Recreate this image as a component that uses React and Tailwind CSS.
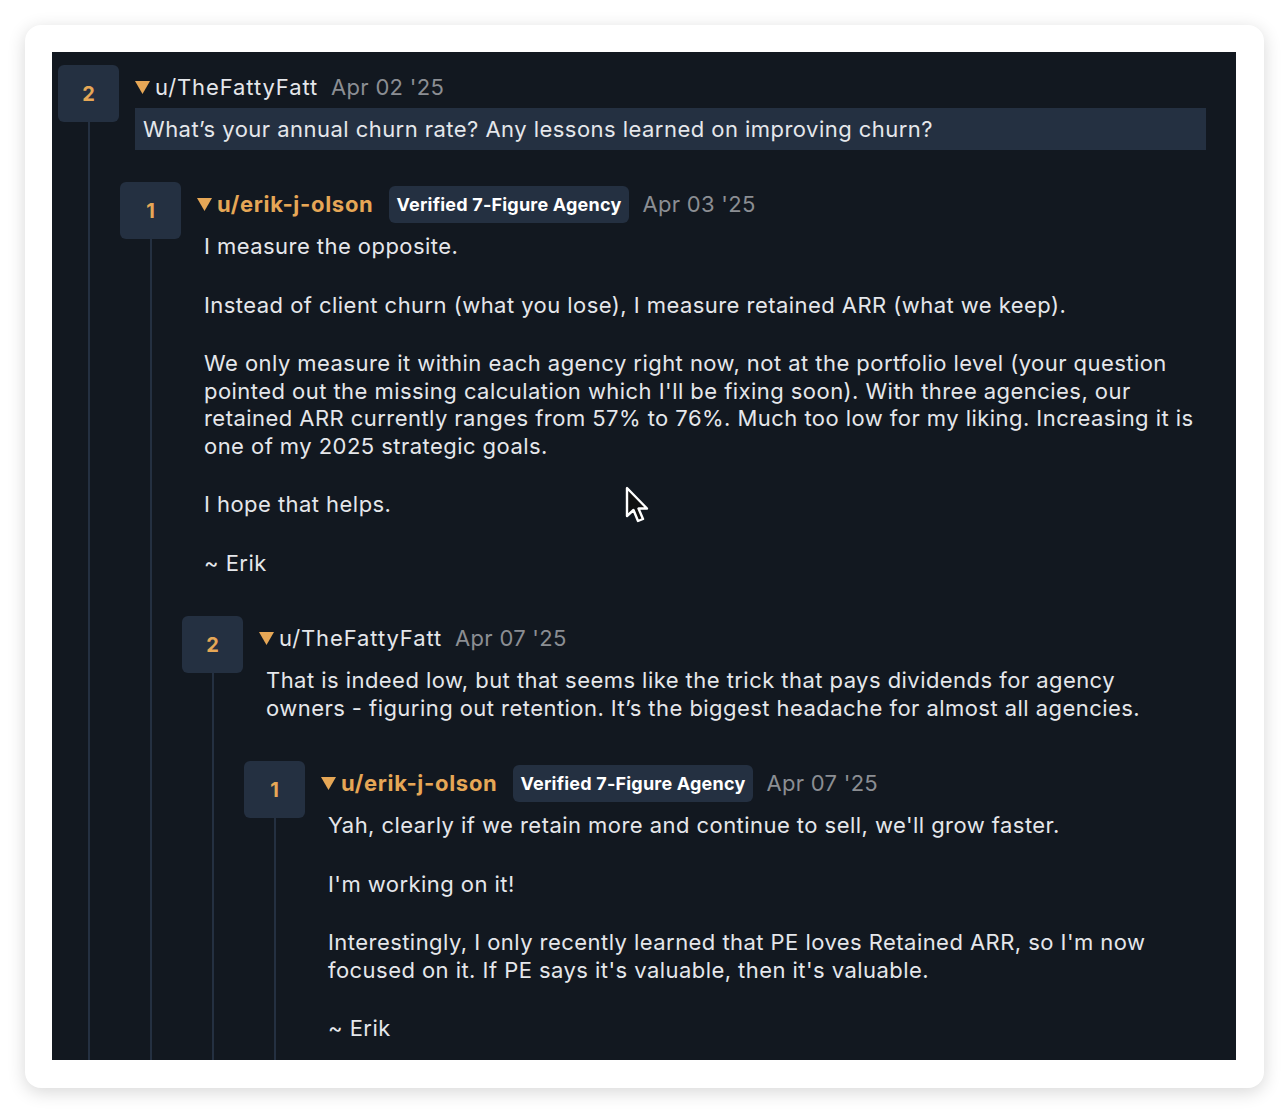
import React from 'react'

const ORANGE = 'text-[#e6a756]'

function Caret() {
  return (
    <svg width="15" height="13" viewBox="0 0 15 13" className="shrink-0">
      <polygon points="0,0 15,0 7.5,13" fill="#e6a756" />
    </svg>
  )
}

function Cursor() {
  return (
    <svg width="28" height="40" viewBox="0 0 28 40" className="absolute left-[572px] top-[434px] pointer-events-none">
      <path
        d="M3 2 L3 30 L9.5 24 L14 35 L19 33 L14.5 22.5 L23 22.5 Z"
        fill="#111"
        stroke="#fff"
        strokeWidth="2.4"
        strokeLinejoin="round"
      />
    </svg>
  )
}

function Comment({ score, user, op, verified, date, title, paras = [], tail, children }) {
  return (
    <div className="flex">
      <div className="w-[62px] shrink-0 flex flex-col">
        <div className={`w-[61px] h-[57px] rounded-md bg-[#243041] flex items-center justify-center font-bold text-[20px] ${ORANGE}`}>
          {score}
        </div>
        <div className="w-[2px] flex-1 bg-[#243041] ml-[30px]" />
      </div>
      <div className="flex-1 min-w-0">
        <div className="pl-[15px]">
          <div className="h-[44px] flex items-center">
            <div className="flex items-center gap-[5px]">
              <Caret />
              <span
                className={
                  op
                    ? 'text-[22px] tracking-[0.9px] text-[#e5e7eb]'
                    : `text-[22px] tracking-[0.7px] font-bold ${ORANGE}`
                }
              >
                {user}
              </span>
            </div>
            {verified && (
              <span className="ml-[15px] h-[37px] px-[8px] flex items-center rounded-md bg-[#243041] text-white font-bold text-[18px] tracking-[0.2px]">
                Verified 7-Figure Agency
              </span>
            )}
            <span className="ml-[13px] text-[22px] tracking-[0.3px] text-[#8b8e93]">{date}</span>
          </div>
          {title ? (
            <div className="-mt-px bg-[#243041] px-[8px] py-[7px] text-[22px] tracking-[0.46px] leading-[28px] text-[#e5e7eb]">
              {title}
            </div>
          ) : (
            <div className="pl-[7px] pr-[8px] pt-[7px] pb-[7px] text-[22px] tracking-[0.45px] leading-[27.5px] text-[#e5e7eb] flex flex-col gap-[31px]">
              {paras.map((p, i) => (
                <p key={i}>{p}</p>
              ))}
            </div>
          )}
          {tail && <div className="h-[60px]" />}
        </div>
        {children && <div className="mt-[32px]">{children}</div>}
      </div>
    </div>
  )
}

export default function App() {
  return (
    <div className="min-h-screen bg-white p-[25px]" style={{ fontFamily: 'Inter, "Noto Sans", sans-serif' }}>
      <div className="w-[1239px] h-[1063px] rounded-2xl bg-white shadow-[0_4px_18px_rgba(0,0,0,0.16)] p-[27px]">
        <div className="relative w-[1184px] h-[1008px] bg-[#121820] overflow-hidden pl-[6px] pt-[13px] pr-[30px]">
          <Comment
            score="2"
            user="u/TheFattyFatt"
            op
            date="Apr 02 '25"
            title="What’s your annual churn rate? Any lessons learned on improving churn?"
          >
            <Comment
              score="1"
              user="u/erik-j-olson"
              verified
              date="Apr 03 '25"
              paras={[
                'I measure the opposite.',
                'Instead of client churn (what you lose), I measure retained ARR (what we keep).',
                "We only measure it within each agency right now, not at the portfolio level (your question pointed out the missing calculation which I'll be fixing soon). With three agencies, our retained ARR currently ranges from 57% to 76%. Much too low for my liking. Increasing it is one of my 2025 strategic goals.",
                'I hope that helps.',
                '~ Erik',
              ]}
            >
              <Comment
                score="2"
                user="u/TheFattyFatt"
                op
                date="Apr 07 '25"
                paras={[
                  'That is indeed low, but that seems like the trick that pays dividends for agency owners - figuring out retention. It’s the biggest headache for almost all agencies.',
                ]}
              >
                <Comment
                  score="1"
                  user="u/erik-j-olson"
                  verified
                  date="Apr 07 '25"
                  tail
                  paras={[
                    "Yah, clearly if we retain more and continue to sell, we'll grow faster.",
                    "I'm working on it!",
                    "Interestingly, I only recently learned that PE loves Retained ARR, so I'm now focused on it. If PE says it's valuable, then it's valuable.",
                    '~ Erik',
                  ]}
                />
              </Comment>
            </Comment>
          </Comment>
          <Cursor />
        </div>
      </div>
    </div>
  )
}
